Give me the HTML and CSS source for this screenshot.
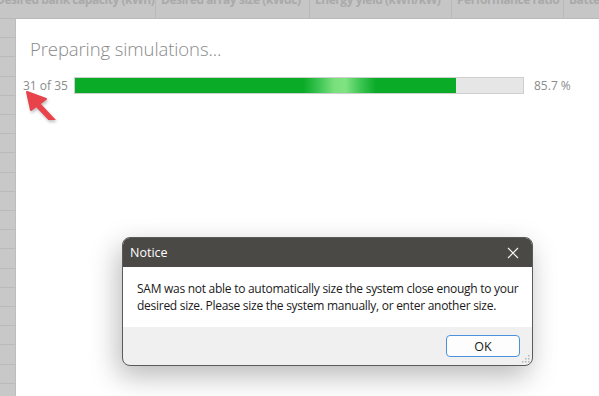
FILE: index.html
```html
<!DOCTYPE html>
<html>
<head>
<meta charset="utf-8">
<link rel="stylesheet" href="styles.css">
</head>
<body>
<div class="screen">
  <div class="header">
    <div class="hcell c1">Desired bank capacity (kWh)</div>
    <div class="hcell c2">Desired array size (kWdc)</div>
    <div class="hcell c3">Energy yield (kWh/kW)</div>
    <div class="hcell c4">Performance ratio</div>
    <div class="hcell c5">Battery</div>
  </div>
  <div class="main">
    <div class="rows"></div>
    <div class="panel">
      <div class="title">Preparing simulations...</div>
      <div class="progress-row">
        <span class="count">31 of 35</span>
        <div class="bar"><div class="fill" style="width:85%"></div></div>
        <span class="pct">85.7 %</span>
      </div>
      <svg class="arrow" width="50" height="50" viewBox="0 0 50 50">
        <g transform="translate(-16,-70)">
          <path d="M38 105 L55 123" stroke="#e8434b" stroke-width="5.5" stroke-linecap="round" fill="none"/>
          <path d="M27 92 L46 99 L31 110 Z" fill="#e8434b" stroke="#e8434b" stroke-width="2" stroke-linejoin="round"/>
        </g>
      </svg>
      <div class="dialog">
        <div class="dlg-title">
          <span>Notice</span>
          <svg class="close" width="12" height="12" viewBox="0 0 12 12"><path d="M1 1 L11 11 M11 1 L1 11" stroke="#f2f2f2" stroke-width="1.2"/></svg>
        </div>
        <div class="dlg-body">SAM was not able to automatically size the system close enough to your desired size. Please size the system manually, or enter another size.</div>
        <div class="dlg-foot">
          <button class="ok">OK</button>
          <svg class="grip" width="8" height="8" viewBox="0 0 8 8"><g fill="#b5b5b5"><rect x="6" y="0" width="1.5" height="1.5"/><rect x="3" y="3" width="1.5" height="1.5"/><rect x="6" y="3" width="1.5" height="1.5"/><rect x="0" y="6" width="1.5" height="1.5"/><rect x="3" y="6" width="1.5" height="1.5"/><rect x="6" y="6" width="1.5" height="1.5"/></g></svg>
        </div>
      </div>
    </div>
  </div>
</div>
</body>
</html>
```
FILE: styles.css
```css
html, body { margin: 0; padding: 0; }
body {
  width: 599px;
  height: 396px;
  overflow: hidden;
  background: #c6c6c6;
  font-family: "Open Sans", "Segoe UI", sans-serif;
}
.screen { display: flex; flex-direction: column; height: 396px; }
.header {
  display: flex;
  align-items: flex-start;
  height: 18px;
  border-bottom: 1px solid #b9b9b9;
  background: #c6c6c6;
  margin-left: -9px;
  flex: none;
  overflow: hidden;
}
.hcell {
  font-weight: 700;
  font-size: 12px;
  line-height: 16px;
  height: 30px;
  margin-top: -8px;
  color: #aaaaaa;
  padding-left: 5px;
  border-right: 1px solid #b9b9b9;
  white-space: nowrap;
  overflow: hidden;
  flex: none;
  letter-spacing: -0.45px;
}
.c1 { width: 159px; }
.c2 { width: 148px; }
.c3 { width: 136px; }
.c4 { width: 106px; }
.c5 { width: 60px; border-right: none; }
.main { display: flex; flex: 1; }
.rows {
  width: 15px;
  border-right: 1px solid #bdbdbd;
  background: repeating-linear-gradient(to bottom, #c8c8c8 0, #c8c8c8 18.2px, #bababa 18.2px, #bababa 19.2px);
  flex: none;
}
.panel {
  flex: 1;
  background: #ffffff;
  position: relative;
  padding: 17px 0 0 14px;
}
.title {
  font-size: 18.5px;
  font-weight: 300;
  color: #8a8a8a;
  line-height: 26px;
  letter-spacing: -0.1px;
}
.progress-row {
  display: flex;
  align-items: center;
  margin-top: 15px;
  margin-left: -7px;
}
.count {
  font-size: 12px;
  color: #8c8c8c;
  width: 51px;
}
.bar {
  width: 448px;
  height: 15px;
  border: 1px solid #cfcfcf;
  background: #e6e6e6;
}
.fill {
  height: 100%;
  background: linear-gradient(to right, #0aab27 0%, #0aab27 60%, #3cc552 64%, #79e07c 68%, #80e382 71%, #3cc552 75%, #0aab27 79%, #0aab27 100%);
}
.pct {
  font-size: 12px;
  color: #8c8c8c;
  margin-left: 10px;
}
.arrow {
  position: absolute;
  left: 0px;
  top: 51px;
  filter: drop-shadow(1px 2px 1.5px rgba(0,0,0,0.25));
}
.dialog {
  position: absolute;
  left: 106px;
  top: 218px;
  width: 409px;
  height: 127px;
  border: 1px solid #5a5a5a;
  border-radius: 8px;
  overflow: hidden;
  display: flex;
  flex-direction: column;
  box-shadow: -4px 10px 28px rgba(0,0,0,0.28);
  background: #f0f0f0;
}
.dlg-title {
  height: 29px;
  background: #4b4946;
  color: #ffffff;
  font-size: 12.5px;
  display: flex;
  align-items: center;
  justify-content: space-between;
  padding: 0 13px 0 7px;
  flex: none;
}
.close { display: block; }
.dlg-body {
  background: #ffffff;
  height: 60px;
  box-sizing: border-box;
  padding: 13px 8px 0 14px;
  font-size: 12px;
  letter-spacing: -0.27px;
  line-height: 17px;
  color: #1a1a1a;
  flex: none;
}
.dlg-foot {
  flex: 1;
  display: flex;
  justify-content: flex-end;
  align-items: flex-start;
  padding: 8px 12px 0 0;
  position: relative;
}
.ok {
  width: 74px;
  height: 22px;
  border: 1px solid #4a92dd;
  border-radius: 4px;
  background: #fdfdfd;
  font-family: "Open Sans", sans-serif;
  font-size: 12.5px;
  color: #1a1a1a;
  padding: 0;
}
.grip { position: absolute; right: 2px; bottom: 2px; }
```
